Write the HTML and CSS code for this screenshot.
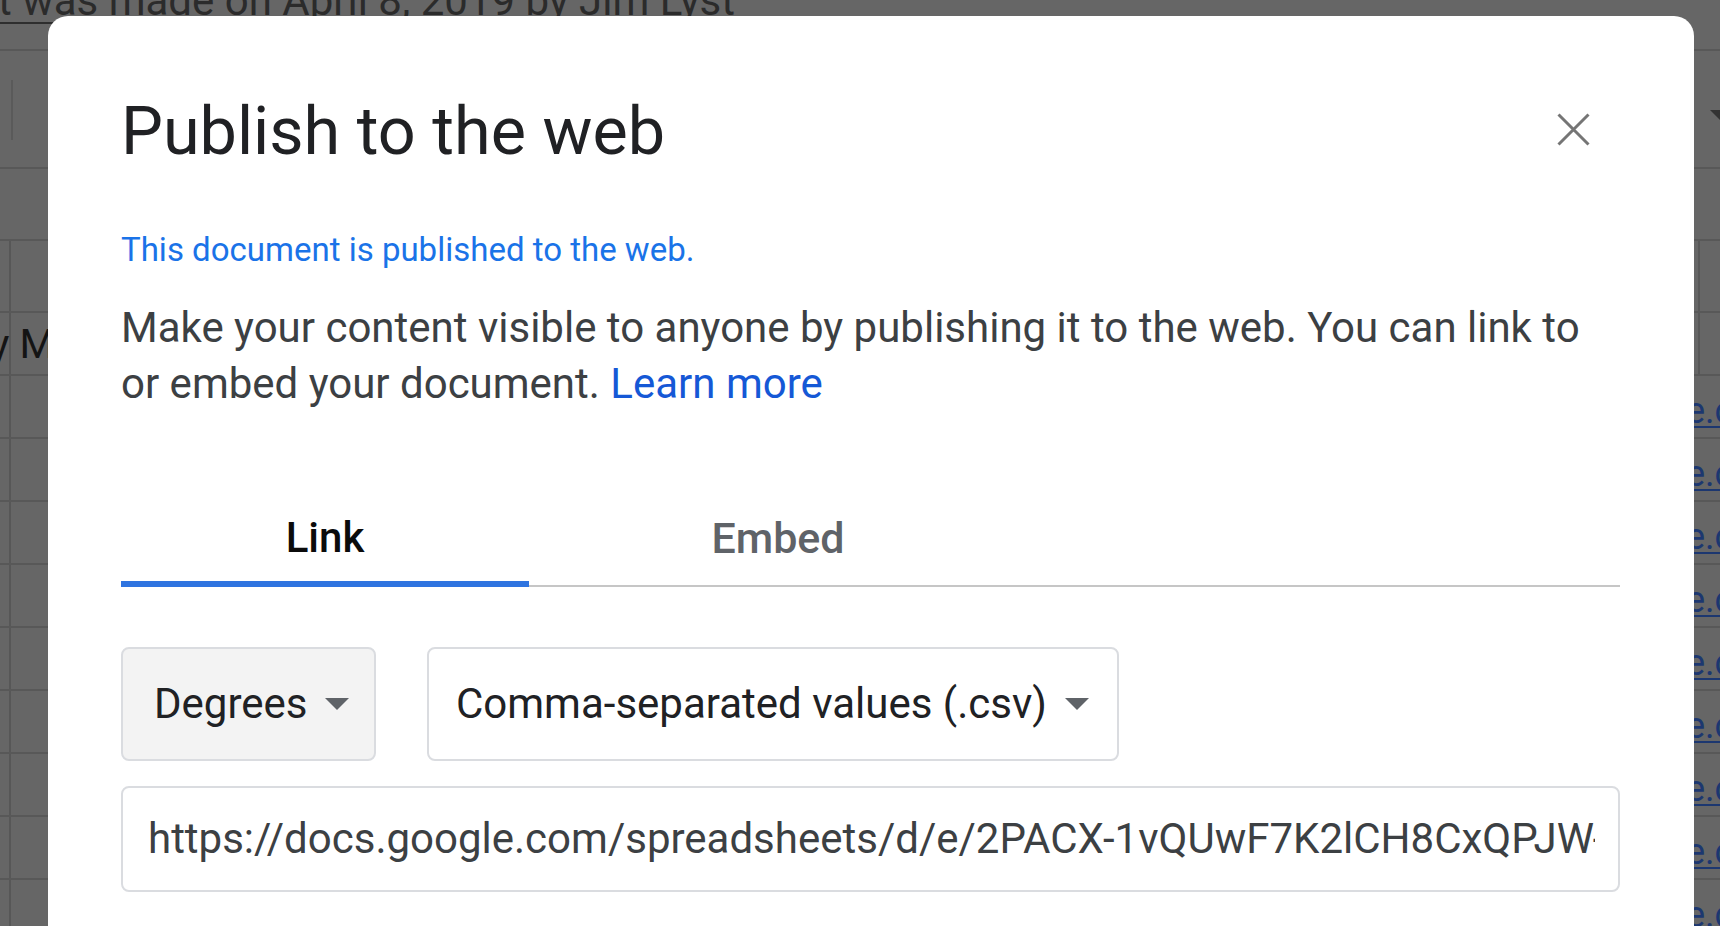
FILE: index.html
```html
<!DOCTYPE html>
<html lang="en">
<head>
<meta charset="utf-8">
<title>Publish to the web</title>
<link rel="stylesheet" href="styles.css">
</head>
<body>
<div class="sheet">
  <div class="doc-title"><span class="doc-name">t was made on April 8, 2019 by Jim Lyst</span></div>
  <div class="row toolbar"><span class="tool-sep"></span><span class="tool-caret"></span></div>
  <div class="row formula"></div>
  <div class="row colhead"><span class="rowhead"></span><span class="right-col"></span></div>
  <div class="row cells"><span class="rowhead"></span><span class="overflow-text">y M</span><span class="right-col"></span></div>
  <div class="row cells"><span class="rowhead"></span><a class="sheet-link">e.com/spreadsheets</a></div>
  <div class="row cells"><span class="rowhead"></span><a class="sheet-link">e.com/spreadsheets</a></div>
  <div class="row cells"><span class="rowhead"></span><a class="sheet-link">e.com/spreadsheets</a></div>
  <div class="row cells"><span class="rowhead"></span><a class="sheet-link">e.com/spreadsheets</a></div>
  <div class="row cells"><span class="rowhead"></span><a class="sheet-link">e.com/spreadsheets</a></div>
  <div class="row cells"><span class="rowhead"></span><a class="sheet-link">e.com/spreadsheets</a></div>
  <div class="row cells"><span class="rowhead"></span><a class="sheet-link">e.com/spreadsheets</a></div>
  <div class="row cells"><span class="rowhead"></span><a class="sheet-link">e.com/spreadsheets</a></div>
  <div class="row cells"><span class="rowhead"></span><a class="sheet-link">e.com/spreadsheets</a></div>
</div>

<div class="dialog" role="dialog">
  <div class="dialog-head">
    <h1 class="dialog-title">Publish to the web</h1>
    <button class="close-btn" aria-label="Close">
      <svg width="33" height="33" viewBox="0 0 33 33"><path d="M1.5 1.5 L31.5 31.5 M31.5 1.5 L1.5 31.5" stroke="#757575" stroke-width="3" fill="none"/></svg>
    </button>
  </div>
  <p class="status">This document is published to the web.</p>
  <p class="desc">Make your content visible to anyone by publishing it to the web. You can link to or embed your document. <a class="learn">Learn more</a></p>
  <div class="tabs">
    <div class="tab tab-link active">Link</div>
    <div class="tab tab-embed">Embed</div>
  </div>
  <div class="controls">
    <div class="select select-sheet"><span>Degrees</span><span class="caret"></span></div>
    <div class="select select-format"><span>Comma-separated values (.csv)</span><span class="caret"></span></div>
  </div>
  <div class="url-field"><div class="url-text">https://docs.google.com/spreadsheets/d/e/2PACX-1vQUwF7K2lCH8CxQPJW-xk9Zb3pub?output=csv</div></div>
</div>
</body>
</html>
```

FILE: styles.css
```css
html, body {
  margin: 0;
  padding: 0;
  overflow: hidden;
  height: 100%;
}
body {
  background: #666666;
  font-family: Roboto, "Liberation Sans", Arial, sans-serif;
  position: relative;
}

/* background spreadsheet */
.sheet {
  display: flex;
  flex-direction: column;
  width: 1720px;
}
.doc-title {
  height: 51px;
  box-sizing: border-box;
  border-bottom: 2px solid #585858;
  overflow: hidden;
}
.doc-name {
  display: inline-block;
  margin-top: -25px;
  margin-left: -2px;
  font-size: 42px;
  line-height: 50px;
  color: #2b2b2b;
  border-bottom: 2px solid #2e2e2e;
  height: 46px;
}
.row {
  display: flex;
  box-sizing: border-box;
  border-bottom: 2px solid #585858;
  position: relative;
}
.toolbar { height: 118px; align-items: flex-start; }
.tool-sep {
  width: 2px;
  height: 60px;
  margin-top: 29px;
  margin-left: 11px;
  background: #5a5a5a;
}
.tool-caret {
  margin-left: auto;
  margin-top: 59px;
  margin-right: -10px;
  width: 0;
  height: 0;
  border-left: 10px solid transparent;
  border-right: 10px solid transparent;
  border-top: 10px solid #333333;
}
.formula { height: 72px; }
.colhead { height: 72px; }
.cells { height: 63px; }
.rowhead {
  width: 9px;
  flex: none;
  border-right: 2px solid #575757;
}
.right-col {
  margin-left: auto;
  margin-right: 20px;
  width: 2px;
  background: #575757;
}
.overflow-text {
  font-size: 41px;
  line-height: 63px;
  color: #141414;
  margin-left: -21px;
  white-space: nowrap;
  position: relative;
}
.sheet-link {
  margin-left: auto;
  width: 34px;
  overflow: hidden;
  white-space: nowrap;
  font-size: 36px;
  line-height: 56px;
  padding-top: 7px;
  color: #1c3770;
  text-decoration: underline;
  text-decoration-thickness: 2px;
  text-underline-offset: 3px;
}

/* dialog */
.dialog {
  position: absolute;
  left: 48px;
  top: 16px;
  width: 1646px;
  height: 980px;
  box-sizing: border-box;
  background: #ffffff;
  border-radius: 20px;
  padding: 76px 74px 0 73px;
}
.dialog-head {
  display: flex;
  justify-content: space-between;
  align-items: flex-start;
}
.dialog-title {
  margin: 0;
  font-weight: 400;
  font-size: 66.5px;
  line-height: 78px;
  color: #202124;
}
.close-btn {
  width: 60px;
  height: 60px;
  margin-top: 7px;
  margin-right: 17px;
  padding: 0;
  border: 0;
  background: transparent;
  display: flex;
  align-items: center;
  justify-content: center;
}
.status {
  margin: 60px 0 0;
  font-size: 33px;
  line-height: 40px;
  color: #1a73e8;
}
.desc {
  margin: 30px 0 0;
  max-width: 1488px;
  font-size: 42px;
  line-height: 56px;
  color: #3c4043;
}
.learn {
  color: #1558d6;
}
.tabs {
  display: flex;
  margin-top: 101px;
  border-bottom: 2px solid #c6c6c6;
}
.tab {
  font-weight: 500;
  font-size: 42px;
  line-height: 50px;
  padding-bottom: 18px;
  border-bottom: 6px solid transparent;
  margin-bottom: -2px;
  text-align: center;
  color: #5f6368;
}
.tab-link { width: 408px; }
.tab-embed { width: 498px; font-size: 43px; }
.tab.active {
  color: #0b0b0b;
  border-bottom-color: #2f74e0;
}
.controls {
  display: flex;
  gap: 51px;
  margin-top: 60px;
}
.select {
  height: 114px;
  box-sizing: border-box;
  border: 2px solid #dadce0;
  border-radius: 8px;
  display: flex;
  align-items: center;
  gap: 18px;
  font-size: 42px;
  line-height: 50px;
  color: #202124;
}
.select-sheet {
  width: 255px;
  padding-left: 31px;
  background: #f3f3f3;
}
.select-format {
  width: 692px;
  padding-left: 27px;
  background: #ffffff;
}
.caret {
  width: 0;
  height: 0;
  border-left: 12px solid transparent;
  border-right: 12px solid transparent;
  border-top: 12px solid #5f6368;
}
.url-field {
  margin-top: 25px;
  height: 106px;
  box-sizing: border-box;
  border: 2px solid #dadce0;
  border-radius: 8px;
  padding: 0 23px 0 25px;
  display: flex;
  align-items: center;
}
.url-text {
  overflow: hidden;
  white-space: nowrap;
  font-size: 42px;
  line-height: 50px;
  color: #3c4043;
  width: 100%;
}
```
